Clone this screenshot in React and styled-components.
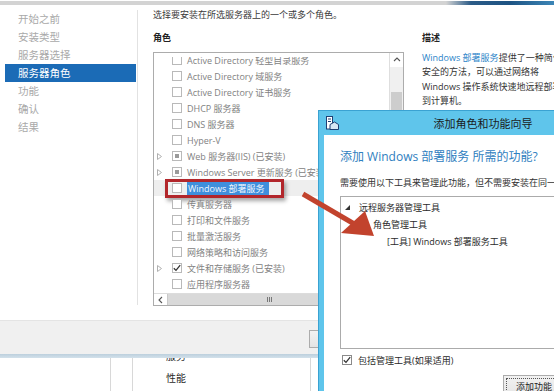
import styled, { createGlobalStyle } from 'styled-components'

const font = `"Open Sans", "Noto Sans CJK SC", sans-serif`

const GlobalStyle = createGlobalStyle`
  html, body {
    background: #fff;
    margin: 0;
    overflow: hidden;
    padding: 0;
  }

  #root {
    font-family: ${font};
    height: 391px;
    overflow: hidden;
    position: relative;
    width: 554px;
  }
`

const Screen = styled.div`
  display: flex;
  flex-direction: column;
  height: 391px;
  width: 554px;
`

const ProgressStrip = styled.div`
  background: linear-gradient(90deg, #d3d3d3 0, #d3d3d3 80.5%, #2b5b87 85%, #1d5383 92%, #3c86b7 100%);
  flex: none;
  height: 4px;
  margin-top: 1px;
`

const WizardBody = styled.div`
  align-items: flex-start;
  display: flex;
  flex: none;
  height: 315px;
`

const Nav = styled.ul`
  border-right: 1px solid #e2e2e2;
  box-sizing: border-box;
  flex: none;
  height: 295px;
  list-style: none;
  margin: 5px 0 0;
  padding: 0 0 0 5px;
  width: 138px;
`

const NavItem = styled.li`
  background: ${p => (p.$active ? '#1b6bb6' : 'transparent')};
  color: ${p => (p.$active ? '#ffffff' : '#a9a9a9')};
  font-size: 10.5px;
  height: 18px;
  line-height: 18px;
  margin-right: 1px;
  padding-left: 13px;
  white-space: nowrap;
`

const Content = styled.div`
  flex: 1;
  min-width: 0;
  padding: 3px 0 0 15px;
`

const Intro = styled.p`
  color: #3a3a3a;
  font-size: 9px;
  line-height: 14px;
  margin: 0;
  white-space: nowrap;
`

const Columns = styled.div`
  column-gap: 18px;
  display: grid;
  grid-template-columns: 251px 1fr;
  margin-top: 9px;
`

const SectionLabel = styled.h4`
  color: #222;
  font-size: 9px;
  font-weight: 700;
  line-height: 14px;
  margin: 0;
`

const ListBox = styled.div`
  background: #fff;
  border: 1px solid #acacac;
  box-sizing: border-box;
  display: grid;
  grid-template-columns: 1fr 14px;
  grid-template-rows: 1fr 12px;
  height: 254px;
  margin-top: 7px;
  width: 251px;
`

const Viewport = styled.div`
  border-top: 4px solid #fff;
  min-height: 0;
  overflow: hidden;
`

const Rows = styled.div`
  margin-top: -5px;
`

const Row = styled.div`
  align-items: center;
  background: ${p => (p.$hover ? '#eeeeee' : 'transparent')};
  color: #828282;
  display: flex;
  font-size: 9px;
  height: 16px;
  padding-left: 3px;
  white-space: nowrap;
`

const Expander = styled.span`
  display: flex;
  flex: none;
  width: 15px;
`

const Box = styled.span`
  align-items: center;
  background: #fff;
  border: 1px solid ${p => (p.$dark ? '#8a8a8a' : '#b9b9b9')};
  box-sizing: border-box;
  display: flex;
  flex: none;
  height: 10px;
  justify-content: center;
  width: 10px;
`

const PartialMark = styled.span`
  background: #9a9a9a;
  height: 4px;
  width: 4px;
`

const RoleName = styled.span`
  background: ${p => (p.$selected ? '#3f8fdc' : 'transparent')};
  color: ${p => (p.$selected ? '#f4f8fd' : 'inherit')};
  line-height: 13px;
  margin-left: 5px;
  padding: ${p => (p.$selected ? '0 4px 0 1px' : '0')};
`

const Marked = styled.span`
  align-items: center;
  border: 3px solid #b2262b;
  box-shadow: 2px 3px 4px rgba(0, 0, 0, 0.35);
  box-sizing: border-box;
  display: flex;
  height: 19px;
  margin-left: -7px;
  padding: 0 12px 0 4px;
`

const VScroll = styled.div`
  background: #f0f0f0;
  border-left: 1px solid #dedede;
  display: flex;
  flex-direction: column;
`

const ScrollButton = styled.span`
  align-items: center;
  background: #fff;
  display: flex;
  flex: none;
  height: ${p => (p.$horizontal ? '100%' : '14px')};
  justify-content: center;
  width: ${p => (p.$horizontal ? '13px' : '100%')};
`

const VThumb = styled.div`
  background: #cdcdcd;
  height: 60px;
  margin: 25px 1px 0;
`

const HScroll = styled.div`
  background: #e6e6e6;
  border-top: 1px solid #dcdcdc;
  display: flex;
`

const HThumb = styled.div`
  align-items: center;
  background: #d9d9d9;
  border-left: 1px solid #c9c9c9;
  display: flex;
  flex: none;
  justify-content: center;
  width: 204px;
`

const Corner = styled.div`
  background: #f0f0f0;
`

const DescText = styled.p`
  color: #333;
  font-size: 9px;
  line-height: 14.3px;
  margin: 6px 0 0;
  white-space: nowrap;
`

const LinkText = styled.span`
  color: #2c84c8;
`

const ButtonBar = styled.div`
  align-items: flex-start;
  background: #f0f0f0;
  border-top: 1px solid #e4e4e4;
  box-sizing: border-box;
  display: flex;
  flex: none;
  height: 34px;
  padding: 9px 0 0 309px;
`

const WizardButton = styled.button`
  background: linear-gradient(#f2f2f2, #e4e4e4);
  border: 1px solid #acacac;
  color: #222;
  font-family: ${font};
  font-size: 9px;
  height: ${p => (p.$tall ? '22px' : '18px')};
  outline: ${p => (p.$focus ? '1px dotted #555' : 'none')};
  outline-offset: -4px;
  padding: 0 10px;
  white-space: nowrap;
  width: ${p => p.$width || 'auto'};
`

const ShellLine = styled.div`
  background: linear-gradient(#bccfdd, #d3e1eb);
  flex: none;
  height: 4px;
`

const LowerPane = styled.div`
  display: flex;
  flex: 1;
  min-height: 0;
  overflow: hidden;
`

const PaneColumn = styled.div`
  border-right: 1px solid #d8d8d8;
  box-sizing: border-box;
  flex: none;
  padding-left: ${p => p.$pad || 0}px;
  width: ${p => p.$width}px;
`

const PaneItem = styled.div`
  color: #2a2a2a;
  font-size: 10px;
  line-height: 22px;
  &:first-child {
    margin-top: -13px;
  }
`

const Dialog = styled.section`
  background: #5fc5eb;
  border: 1px solid #3aa2d2;
  box-sizing: border-box;
  display: flex;
  flex-direction: column;
  height: 300px;
  left: 318px;
  padding: 0 5px 5px;
  position: absolute;
  top: 110px;
  width: 330px;
  z-index: 2;
`

const DialogTitleBar = styled.header`
  align-items: center;
  display: grid;
  flex: none;
  grid-template-columns: 1fr auto 1fr;
  height: 24px;
`

const TitleIcon = styled.svg`
  display: block;
  margin-left: 2px;
`

const DialogTitle = styled.h1`
  color: #1b1b1b;
  font-size: 11px;
  font-weight: 400;
  margin: 0;
  white-space: nowrap;
`

const DialogBody = styled.div`
  background: #fff;
  display: flex;
  flex: 1;
  flex-direction: column;
  padding: 14px 0 0 16px;
`

const DialogHeading = styled.h2`
  color: #2f80c0;
  font-size: 12px;
  font-weight: 400;
  line-height: 16px;
  margin: 0;
  white-space: nowrap;
`

const DialogText = styled.p`
  color: #333;
  font-size: 9px;
  line-height: 14px;
  margin: 11px 0 0;
  white-space: nowrap;
`

const TreeBox = styled.div`
  border: 1px solid #ababab;
  box-sizing: border-box;
  flex: none;
  height: 153px;
  margin-top: 6px;
  padding-top: 2px;
`

const TreeRow = styled.div`
  align-items: center;
  color: #2a2a2a;
  display: flex;
  font-size: 9px;
  height: 17px;
  padding-left: ${p => 4 + p.$level * 14}px;
  white-space: nowrap;
`

const TreeToggle = styled.span`
  display: flex;
  flex: none;
  width: 14px;
`

const IncludeRow = styled.label`
  align-items: center;
  color: #2a2a2a;
  display: flex;
  font-size: 9px;
  gap: 6px;
  height: 10px;
  margin: 6px 0 0 2px;
  white-space: nowrap;
`

const DialogActions = styled.div`
  display: flex;
  gap: 6px;
  justify-content: flex-end;
  margin-top: 10px;
  padding-right: 9px;
`

const ArrowLayer = styled.svg`
  height: 391px;
  left: 0;
  pointer-events: none;
  position: absolute;
  top: 0;
  width: 554px;
  z-index: 3;
`

const steps = ['开始之前', '安装类型', '服务器选择', '服务器角色', '功能', '确认', '结果']

const roles = [
  { name: 'Active Directory 轻型目录服务' },
  { name: 'Active Directory 域服务' },
  { name: 'Active Directory 证书服务' },
  { name: 'DHCP 服务器' },
  { name: 'DNS 服务器' },
  { name: 'Hyper-V' },
  { name: 'Web 服务器(IIS) (已安装)', expandable: true, state: 'partial' },
  { name: 'Windows Server 更新服务 (已安装)', expandable: true, state: 'partial' },
  { name: 'Windows 部署服务', marked: true },
  { name: '传真服务器' },
  { name: '打印和文件服务' },
  { name: '批量激活服务' },
  { name: '网络策略和访问服务' },
  { name: '文件和存储服务 (已安装)', expandable: true, state: 'checked' },
  { name: '应用程序服务器' },
]

const tools = [
  { level: 0, label: '远程服务器管理工具', open: true },
  { level: 1, label: '角色管理工具' },
  { level: 2, label: '[工具] Windows 部署服务工具' },
]

function Check() {
  return (
    <svg width="8" height="8" viewBox="0 0 8 8">
      <polyline points="0.8,4.2 3,6.4 7.2,1.2" fill="none" stroke="#333" strokeWidth="1.3" />
    </svg>
  )
}

function Checkbox({ state, dark }) {
  return (
    <Box $dark={dark}>
      {state === 'partial' && <PartialMark />}
      {state === 'checked' && <Check />}
    </Box>
  )
}

function RoleRow({ role }) {
  const box = <Checkbox state={role.state} />
  return (
    <Row $hover={role.marked}>
      <Expander>
        {role.expandable && (
          <svg width="5" height="7" viewBox="0 0 5 7">
            <polygon points="0.5,0.5 4.5,3.5 0.5,6.5" fill="none" stroke="#b0b0b0" />
          </svg>
        )}
      </Expander>
      {role.marked ? (
        <Marked>
          {box}
          <RoleName $selected>{role.name}</RoleName>
        </Marked>
      ) : (
        <>
          {box}
          <RoleName>{role.name}</RoleName>
        </>
      )}
    </Row>
  )
}

function Chevron({ dir }) {
  const pts = dir === 'up' ? '1,5 4,2 7,5' : '5,1 2,4 5,7'
  return (
    <svg width="8" height="8" viewBox="0 0 8 8">
      <polyline points={pts} fill="none" stroke="#555" strokeWidth="1.1" />
    </svg>
  )
}

function RoleList() {
  return (
    <ListBox>
      <Viewport>
        <Rows>
          {roles.map(role => <RoleRow key={role.name} role={role} />)}
        </Rows>
      </Viewport>
      <VScroll>
        <ScrollButton><Chevron dir='up' /></ScrollButton>
        <VThumb />
      </VScroll>
      <HScroll>
        <ScrollButton $horizontal><Chevron dir='left' /></ScrollButton>
        <HThumb>
          <svg width="6" height="5" viewBox="0 0 6 5">
            <path d="M0.5 0v5M2.5 0v5M4.5 0v5" stroke="#777" strokeWidth="1" />
          </svg>
        </HThumb>
      </HScroll>
      <Corner />
    </ListBox>
  )
}

function FeatureDialog() {
  return (
    <Dialog>
      <DialogTitleBar>
        <TitleIcon width="13" height="14" viewBox="0 0 13 14">
          <rect x="0.5" y="0.5" width="6" height="12.5" fill="#ffffff" stroke="#1f3f73" />
          <rect x="2" y="2.5" width="3" height="1" fill="#1f3f73" />
          <rect x="2" y="5" width="3" height="1" fill="#1f3f73" />
          <path d="M4 8.5 L8.5 6 L12.5 8.5 L12.5 13.5 L4 13.5 Z" fill="#d8e7f4" stroke="#1f3f73" />
        </TitleIcon>
        <DialogTitle>添加角色和功能向导</DialogTitle>
      </DialogTitleBar>
      <DialogBody>
        <DialogHeading>添加 Windows 部署服务 所需的功能?</DialogHeading>
        <DialogText>需要使用以下工具来管理此功能，但不需要安装在同一服务器上。</DialogText>
        <TreeBox>
          {tools.map(t => (
            <TreeRow key={t.label} $level={t.level}>
              <TreeToggle>
                {t.open && (
                  <svg width="5" height="5" viewBox="0 0 5 5">
                    <polygon points="5,0 5,5 0,5" fill="#333" />
                  </svg>
                )}
              </TreeToggle>
              {t.label}
            </TreeRow>
          ))}
        </TreeBox>
        <IncludeRow>
          <Checkbox state='checked' dark />
          包括管理工具(如果适用)
        </IncludeRow>
        <DialogActions>
          <WizardButton $tall $focus $width='62px'>添加功能</WizardButton>
          <WizardButton $tall $width='62px'>取消</WizardButton>
        </DialogActions>
      </DialogBody>
    </Dialog>
  )
}

export default function App() {
  return (
    <>
      <GlobalStyle />
      <Screen>
        <ProgressStrip />
        <WizardBody>
          <Nav>
            {steps.map(s => <NavItem key={s} $active={s === '服务器角色'}>{s}</NavItem>)}
          </Nav>
          <Content>
            <Intro>选择要安装在所选服务器上的一个或多个角色。</Intro>
            <Columns>
              <div>
                <SectionLabel>角色</SectionLabel>
                <RoleList />
              </div>
              <div>
                <SectionLabel>描述</SectionLabel>
                <DescText>
                  <LinkText>Windows 部署服务</LinkText>提供了一种简化的、<br />
                  安全的方法，可以通过网络将<br />
                  Windows 操作系统快速地远程部署<br />
                  到计算机。
                </DescText>
              </div>
            </Columns>
          </Content>
        </WizardBody>
        <ButtonBar>
          <WizardButton>&lt; 上一步(P)</WizardButton>
        </ButtonBar>
        <ShellLine />
        <LowerPane>
          <PaneColumn $width={111} />
          <PaneColumn $width={22} />
          <PaneColumn $width={178} $pad={33}>
            <PaneItem>服务</PaneItem>
            <PaneItem>性能</PaneItem>
          </PaneColumn>
        </LowerPane>
      </Screen>
      <FeatureDialog />
      <ArrowLayer viewBox="0 0 554 391">
        <line x1="303" y1="194" x2="356" y2="225" stroke="#c2432d" strokeWidth="5" />
        <polygon points="341,233 365,211 374,236" fill="#c2432d" />
      </ArrowLayer>
    </>
  )
}
